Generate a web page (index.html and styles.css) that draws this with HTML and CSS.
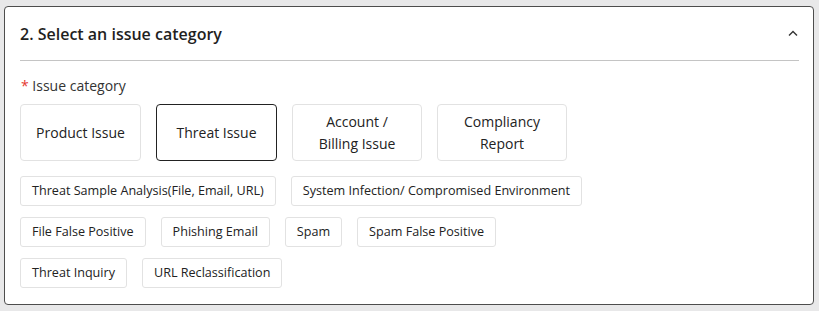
FILE: index.html
```html
<!DOCTYPE html>
<html lang="en">
<head>
<meta charset="utf-8">
<title>Select an issue category</title>
<link rel="stylesheet" href="styles.css">
</head>
<body>
<div class="page">
  <section class="card">
    <header class="card-header">
      <h2 class="card-title">2. Select an issue category</h2>
      <svg class="chevron" width="10" height="7" viewBox="0 0 10 7" aria-hidden="true">
        <path d="M1 5.5 L5 1.5 L9 5.5" fill="none" stroke="#333" stroke-width="1.4"/>
      </svg>
    </header>
    <div class="card-body">
      <div class="field-label"><span class="req">*</span> Issue category</div>
      <div class="tiles">
        <button class="tile">Product Issue</button>
        <button class="tile selected">Threat Issue</button>
        <button class="tile wide">Account /<br>Billing Issue</button>
        <button class="tile wide">Compliancy<br>Report</button>
      </div>
      <div class="chips">
        <div class="chip-row">
          <button class="chip">Threat Sample Analysis(File, Email, URL)</button>
          <button class="chip">System Infection/ Compromised Environment</button>
        </div>
        <div class="chip-row">
          <button class="chip">File False Positive</button>
          <button class="chip">Phishing Email</button>
          <button class="chip">Spam</button>
          <button class="chip">Spam False Positive</button>
        </div>
        <div class="chip-row">
          <button class="chip">Threat Inquiry</button>
          <button class="chip">URL Reclassification</button>
        </div>
      </div>
    </div>
  </section>
</div>
</body>
</html>
```
FILE: styles.css
```css
* { box-sizing: border-box; }
html, body {
  margin: 0;
  padding: 0;
  background: #e8e8e9;
  font-family: "Open Sans", "Noto Sans", sans-serif;
  color: #222;
}
.page {
  padding: 6px 5px 6px 4px;
}
.card {
  background: #fff;
  border: 1px solid #4d4d4d;
  border-radius: 4px;
  padding: 0 14px 16px 15px;
}
.card-header {
  height: 54px;
  border-bottom: 1px solid #c4c4c4;
  display: flex;
  align-items: center;
  justify-content: space-between;
}
.card-title {
  margin: 0;
  font-size: 16px;
  font-weight: 600;
  line-height: 24px;
  color: #1f1f1f;
}
.chevron {
  margin-right: 1px;
  margin-top: -1px;
}
.card-body {
  padding-top: 15px;
}
.field-label {
  font-size: 14px;
  line-height: 20px;
  color: #333;
  margin-bottom: 8px;
  padding-left: 1px;
}
.req {
  color: #e5392f;
}
.tiles {
  display: flex;
  gap: 15px;
  margin-bottom: 15px;
}
.tile {
  width: 121px;
  height: 57px;
  border: 1px solid #e2e2e2;
  border-radius: 4px;
  background: #fff;
  font-family: inherit;
  font-size: 14px;
  line-height: 22px;
  color: #222;
  text-align: center;
  padding: 0 6px;
}
.tile.wide {
  width: 130px;
}
.tile.selected {
  border-color: #222;
}
.chips {
  display: flex;
  flex-direction: column;
  gap: 11px;
}
.chip-row {
  display: flex;
  gap: 15px;
}
.chip {
  height: 30px;
  border: 1px solid #e2e2e2;
  border-radius: 3px;
  background: #fff;
  font-family: inherit;
  font-size: 12.6px;
  line-height: 20px;
  color: #222;
  padding: 0 11px;
  white-space: nowrap;
}
```
